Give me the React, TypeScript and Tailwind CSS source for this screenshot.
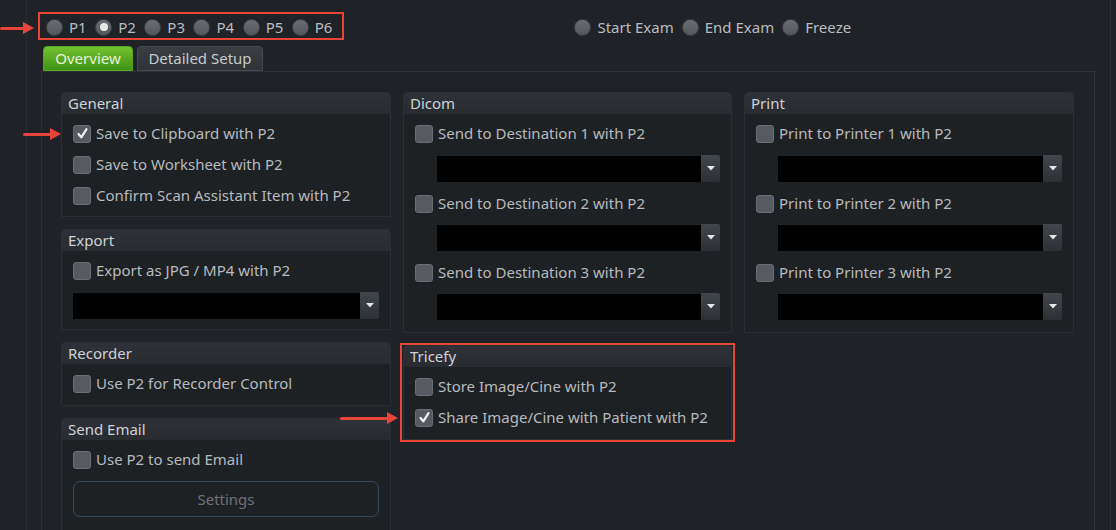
import React from "react";

const font = { fontFamily: '"Noto Sans", "Open Sans", sans-serif' };

function Radio({ label, on }: { label: string; on?: boolean }) {
  return (
    <div className="flex items-center gap-[6px]">
      <div className="w-[17px] h-[17px] rounded-full bg-gradient-to-b from-[#6b6e75] to-[#53565c] border border-[#3d4045] flex items-center justify-center">
        {on && <div className="w-[8px] h-[8px] rounded-full bg-[#e8e8e8]" />}
      </div>
      <span className="text-[15px] text-[#b9bcc0]">{label}</span>
    </div>
  );
}

function Check({ label, on }: { label: string; on?: boolean }) {
  return (
    <div className="flex items-center gap-[5px] h-[31px]">
      <div className="w-[18px] h-[18px] rounded-[3px] bg-[#575a61] border border-[#6a6d73] flex items-center justify-center">
        {on && (
          <svg width="13" height="13" viewBox="0 0 13 13">
            <path d="M2.5 7 L5.3 10.3 L10.5 2.2" fill="none" stroke="#f2f2f2" strokeWidth="2.2" strokeLinecap="round" strokeLinejoin="round" />
          </svg>
        )}
      </div>
      <span className="text-[15px] text-[#b6babe]">{label}</span>
    </div>
  );
}

function Drop() {
  return (
    <div className="flex h-[27px]">
      <div className="flex-1 bg-black border-t border-[#202326]" />
      <div className="w-[19px] bg-gradient-to-b from-[#41464c] to-[#2d3136] rounded-r-[2px] flex items-center justify-center">
        <svg width="8" height="5" viewBox="0 0 8 5">
          <path d="M0 0 H8 L4 4.5 Z" fill="#e4e6e8" />
        </svg>
      </div>
    </div>
  );
}

function Group({ title, children, className = "" }: { title: string; children: React.ReactNode; className?: string }) {
  return (
    <div className={"border border-[#2b2e33] rounded-t-[4px] bg-[#1e2124] " + className}>
      <div className="h-[21px] bg-gradient-to-b from-[#2e3238] to-[#282c31] px-[6px] text-[15px] leading-[21px] text-[#cfd2d5] rounded-t-[4px]">
        {title}
      </div>
      <div className="px-[11px] pt-[4px]">{children}</div>
    </div>
  );
}

function Arrow({ className }: { className: string }) {
  return (
    <div className={"absolute flex items-center " + className}>
      <div className="flex-1 h-[3px] bg-[#e8443a] rounded-l-full" />
      <div className="w-0 h-0 border-y-[6px] border-y-transparent border-l-[11px] border-l-[#e8443a]" />
    </div>
  );
}

export default function App() {
  return (
    <div className="relative w-[1116px] h-[530px] overflow-hidden bg-[#1f2226] flex" style={font}>
      <div className="w-[27px] border-r border-[#2a2d31] shrink-0" />
      <div className="flex-1 flex flex-col pl-[14px]">
        {/* top row */}
        <div className="flex items-center pt-[12px]">
          <div className="flex items-center gap-[8.5px] h-[28px] pt-[2px] pl-[6px] pr-[10px] border-2 border-[#e8443a] -ml-[3px]">
            <Radio label="P1" />
            <Radio label="P2" on />
            <Radio label="P3" />
            <Radio label="P4" />
            <Radio label="P5" />
            <Radio label="P6" />
          </div>
          <div className="ml-[230px] pt-[2px] flex items-center gap-[8px]">
            <Radio label="Start Exam" />
            <Radio label="End Exam" />
            <Radio label="Freeze" />
          </div>
        </div>
        {/* tabs */}
        <div className="flex items-end gap-[4px] h-[25px] mt-[6px] pl-[2px]">
          <div className="w-[90px] h-[25px] rounded-t-[4px] bg-gradient-to-b from-[#74c12e] to-[#3f9316] border border-[#5aa822] text-[15px] text-[#e6f2dc] flex items-center justify-center">
            Overview
          </div>
          <div className="w-[126px] h-[25px] rounded-t-[4px] bg-gradient-to-b from-[#3a3e43] to-[#2f3338] border border-[#474b50] text-[15px] text-[#c7cacd] flex items-center justify-center">
            Detailed Setup
          </div>
        </div>
        {/* panel */}
        <div className="flex-1 flex border-t border-r border-[#2f3236] w-[1054px]">
          <div className="flex-1 border-l border-[#2a2d31] pl-[19px] pt-[20px] flex gap-[12px]">
            {/* col 1 */}
            <div className="w-[330px] flex flex-col gap-[12px]">
              <Group title="General" className="h-[125px]">
                <Check label="Save to Clipboard with P2" on />
                <Check label="Save to Worksheet with P2" />
                <Check label="Confirm Scan Assistant Item with P2" />
              </Group>
              <Group title="Export" className="h-[101px]">
                <Check label="Export as JPG / MP4 with P2" />
                <div className="pt-[6px] pb-[10px]">
                  <Drop />
                </div>
              </Group>
              <Group title="Recorder" className="h-[64px]">
                <Check label="Use P2 for Recorder Control" />
              </Group>
              <Group title="Send Email" className="h-[120px]">
                <Check label="Use P2 to send Email" />
                <div className="mt-[6px] h-[36px] rounded-[7px] border border-[#34485c] flex items-center justify-center text-[15px] text-[#6d7176]">
                  Settings
                </div>
              </Group>
            </div>
            {/* col 2 */}
            <div className="w-[329px] flex flex-col gap-[12px]">
              <Group title="Dicom" className="h-[241px]">
                <Check label="Send to Destination 1 with P2" />
                <div className="pl-[22px] pt-[6px] pb-[6px]"><Drop /></div>
                <Check label="Send to Destination 2 with P2" />
                <div className="pl-[22px] pt-[5px] pb-[6px]"><Drop /></div>
                <Check label="Send to Destination 3 with P2" />
                <div className="pl-[22px] pt-[5px]"><Drop /></div>
              </Group>
              <div className="relative">
                <Group title="Tricefy" className="h-[95px]">
                  <Check label="Store Image/Cine with P2" />
                  <Check label="Share Image/Cine with Patient with P2" on />
                </Group>
                <div className="absolute -inset-x-[3px] -top-[2px] -bottom-[2px] border-2 border-[#e8443a] pointer-events-none" />
              </div>
            </div>
            {/* col 3 */}
            <div className="w-[330px] flex flex-col">
              <Group title="Print" className="h-[241px]">
                <Check label="Print to Printer 1 with P2" />
                <div className="pl-[22px] pt-[6px] pb-[6px]"><Drop /></div>
                <Check label="Print to Printer 2 with P2" />
                <div className="pl-[22px] pt-[5px] pb-[6px]"><Drop /></div>
                <Check label="Print to Printer 3 with P2" />
                <div className="pl-[22px] pt-[5px]"><Drop /></div>
              </Group>
            </div>
          </div>
        </div>
      </div>
      <div className="w-[6px] border-l border-[#2a2d31] shrink-0" />
      {/* annotations */}
      <Arrow className="left-0 top-[22px] w-[34px]" />
      <Arrow className="left-[23px] top-[128px] w-[38px]" />
      <Arrow className="left-[340px] top-[412px] w-[58px]" />
    </div>
  );
}
